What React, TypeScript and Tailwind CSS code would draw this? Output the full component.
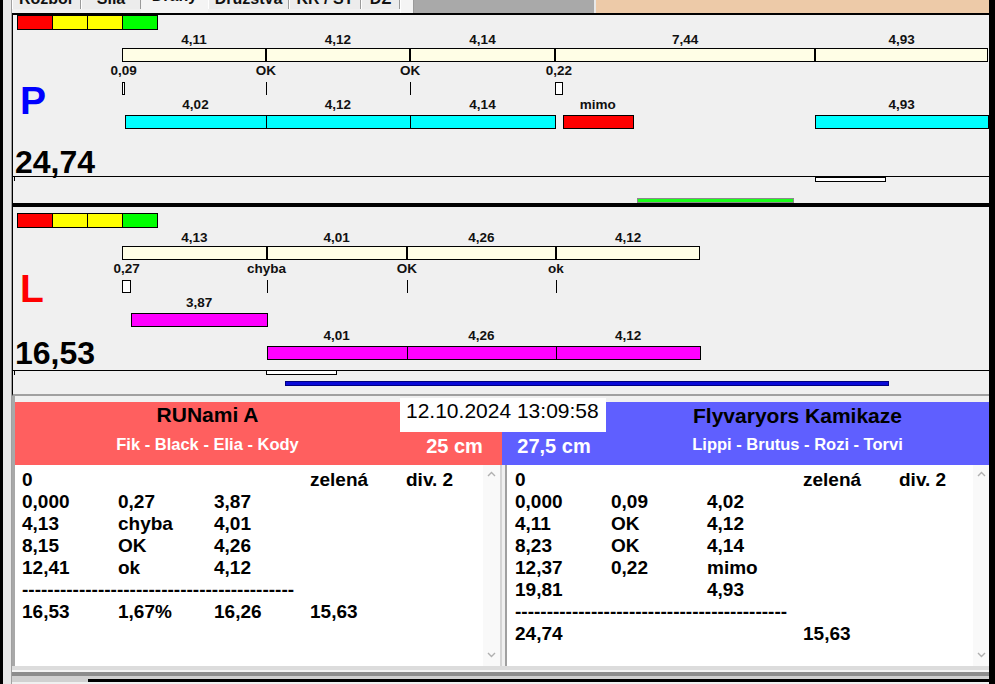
import React from 'react';

// pixelů na metr dráhy
const PX = 35;

type Mark = { label: string; at: number; box?: number };
type Bar = { label: string; from: number; to: number; color?: string };
type Row = { color: string; bars: Bar[] };

const fmt = (n: number) => n.toFixed(2).replace('.', ',');
const x = (m: number) => Math.round(m * PX);

const BLOCKS = ['bg-[#ff0000]', 'bg-[#ffff00]', 'bg-[#ffff00]', 'bg-[#00ff00]'];

const Label: React.FC<{ at: number; top: number; text: string }> = ({ at, top, text }) => (
  <div
    className="absolute -translate-x-1/2 whitespace-nowrap text-[13.5px] font-bold leading-[15px] text-[#111]"
    style={{ left: at * PX, top }}
  >
    {text}
  </div>
);

interface LaneProps {
  letter: string;
  letterColor: string;
  total: string;
  segments: number[];
  marks: Mark[];
  rows: Row[];
  frame: string;
  blocksPad: string;
  canvasH: string;
  letterMt: string;
  totalMt: string;
  stripH: string;
  children?: React.ReactNode;
}

/**
 * Jedna dráha: úseky, značky, běhy a souhrn
 */
const Lane: React.FC<LaneProps> = ({
  letter,
  letterColor,
  total,
  segments,
  marks,
  rows,
  frame,
  blocksPad,
  canvasH,
  letterMt,
  totalMt,
  stripH,
  children
}) => {
  const cum = segments.reduce<number[]>((acc, s) => [...acc, +(acc[acc.length - 1] + s).toFixed(2)], [0]);

  return (
    <div className={`border-l border-l-black bg-[#f0f0f0] ${frame}`}>
      <div className={`flex pl-[4px] ${blocksPad}`}>
        {BLOCKS.map((c, i) => (
          <div key={i} className={`h-[15px] w-[36px] border border-black ${c} ${i > 0 ? '-ml-px' : ''}`} />
        ))}
      </div>

      <div className={`flex ${canvasH}`}>
        <div className="flex w-[109px] shrink-0 flex-col">
          <div className={`ml-[7px] text-[39px] font-bold leading-none ${letterColor} ${letterMt}`}>{letter}</div>
          <div className={`ml-[2px] text-[32px] font-bold leading-none text-black ${totalMt}`}>{total}</div>
        </div>

        <div className="relative flex-1">
          {segments.map((s, i) => (
            <React.Fragment key={i}>
              <Label at={(cum[i] + cum[i + 1]) / 2} top={2} text={fmt(s)} />
              <div
                className="absolute top-[18px] h-[14px] border border-black bg-[#fffee6]"
                style={{ left: x(cum[i]), width: x(cum[i + 1]) - x(cum[i]) }}
              />
            </React.Fragment>
          ))}

          {marks.map((m, i) => (
            <React.Fragment key={i}>
              <Label at={m.box ? m.at + m.box / 2 : m.at} top={33} text={m.label} />
              {m.box ? (
                <div
                  className="absolute top-[52px] h-[13px] border border-black bg-white"
                  style={{ left: x(m.at), width: Math.max(3, x(m.box)) }}
                />
              ) : (
                <div className="absolute top-[52px] h-[13px] w-px bg-black" style={{ left: x(m.at) }} />
              )}
            </React.Fragment>
          ))}

          {rows.map((r, k) =>
            r.bars.map((b, j) => (
              <React.Fragment key={`${k}-${j}`}>
                <Label at={(b.from + b.to) / 2} top={67 + 33 * k} text={b.label} />
                <div
                  className={`absolute h-[14px] border border-black ${b.color ?? r.color}`}
                  style={{ left: x(b.from), width: x(b.to) - x(b.from) + 1, top: 85 + 33 * k }}
                />
              </React.Fragment>
            ))
          )}
        </div>
      </div>

      <div className={`relative border-t border-t-black ${stripH}`}>
        <div className="absolute left-[1px] top-0 h-[4px] w-px bg-black" />
        {children}
      </div>
    </div>
  );
};

const Chevron: React.FC<{ down?: boolean }> = ({ down }) => (
  <svg width="9" height="6" viewBox="0 0 9 6" className="shrink-0">
    <polyline
      points={down ? '1,1 4.5,4.5 8,1' : '1,5 4.5,1.5 8,5'}
      fill="none"
      stroke="#b0b0b0"
      strokeWidth="1.4"
    />
  </svg>
);

const DASH = '-'.repeat(43);

/**
 * Textový výpis s posuvníkem
 */
const TextPanel: React.FC<{ rows: string[][]; className: string; pad: string; bar: string }> = ({
  rows,
  className,
  pad,
  bar
}) => (
  <div className={`flex bg-white ${className}`}>
    <div className={`min-w-0 flex-1 overflow-hidden pt-[4px] text-[19px] font-bold leading-[22px] text-black ${pad}`}>
      {rows.map((r, i) => (
        <div key={i} className="flex h-[22px]">
          {r.map((c, j) => (
            <span key={j} className="w-[96px] shrink-0 whitespace-nowrap">
              {c}
            </span>
          ))}
        </div>
      ))}
    </div>
    <div className={`flex shrink-0 flex-col items-center justify-between bg-[#f9f9f9] pb-[8px] pt-[6px] ${bar}`}>
      <Chevron />
      <Chevron down />
    </div>
  </div>
);

const LEFT_ROWS = [
  ['0', '', '', 'zelená', 'div. 2'],
  ['0,000', '0,27', '3,87'],
  ['4,13', 'chyba', '4,01'],
  ['8,15', 'OK', '4,26'],
  ['12,41', 'ok', '4,12'],
  [DASH],
  ['16,53', '1,67%', '16,26', '15,63']
];

const RIGHT_ROWS = [
  ['0', '', '', 'zelená', 'div. 2'],
  ['0,000', '0,09', '4,02'],
  ['4,11', 'OK', '4,12'],
  ['8,23', 'OK', '4,14'],
  ['12,37', '0,22', 'mimo'],
  ['19,81', '', '4,93'],
  [DASH],
  ['24,74', '', '', '15,63']
];

const TABS = [
  { label: 'Rozbor', w: 'w-[69px]' },
  { label: 'Síla', w: 'w-[60px]' },
  { label: 'Dráhy', w: 'w-[67px]', active: true },
  { label: 'Družstva', w: 'w-[81px]' },
  { label: 'KR / ST', w: 'w-[72px]' },
  { label: 'DZ', w: 'w-[39px]' }
];

export default function App() {
  return (
    <div className="flex h-[684px] w-[995px] overflow-hidden bg-[#f0f0f0] font-['Liberation_Sans',Arial,sans-serif]">
      <div className="w-[3px] shrink-0 bg-black" />
      <div className="w-[9px] shrink-0 border-r border-[#a0a0a0] bg-[#e8e8e8]" />

      <div className="flex w-[977px] shrink-0 flex-col">
        {/* záložky */}
        <div className="flex h-[13px] overflow-hidden">
          {TABS.map((t) => (
            <div
              key={t.label}
              className={`${t.w} shrink-0 text-center text-[16px] font-bold leading-none text-[#111] ${
                t.active ? '-mt-[12px] bg-[#f4f4f4]' : '-mt-[9px] h-[18px] border-x border-l-white border-r-[#9a9a9a] bg-[#ececec]'
              }`}
            >
              {t.label}
            </div>
          ))}
          <div className="w-[14px] shrink-0 border-x border-l-white border-r-[#9a9a9a] bg-[#f4f4f4]" />
          <div className="w-[180px] shrink-0 bg-[#a9a9a9]" />
          <div className="w-[2px] shrink-0 bg-[#e8e8e8]" />
          <div className="flex-1 bg-[#edcaa8]" />
        </div>

        <Lane
          letter="P"
          letterColor="text-[#0000ff]"
          total="24,74"
          segments={[4.11, 4.12, 4.14, 7.44, 4.93]}
          marks={[
            { label: '0,09', at: 0, box: 0.09 },
            { label: 'OK', at: 4.11 },
            { label: 'OK', at: 8.23 },
            { label: '0,22', at: 12.37, box: 0.22 }
          ]}
          rows={[
            {
              color: 'bg-[#00ffff]',
              bars: [
                { label: '4,02', from: 0.09, to: 4.11 },
                { label: '4,12', from: 4.11, to: 8.23 },
                { label: '4,14', from: 8.23, to: 12.37 },
                { label: 'mimo', from: 12.59, to: 14.6, color: 'bg-[#ff0000]' },
                { label: '4,93', from: 19.81, to: 24.74 }
              ]
            }
          ]}
          frame="border-t-2 border-t-black"
          blocksPad="pt-0"
          canvasH="h-[146px]"
          letterMt="mt-[51px]"
          totalMt="mt-[26px]"
          stripH="h-[27px]"
        >
          <div className="absolute left-[802px] top-0 h-[5px] w-[71px] border border-black bg-white" />
          <div className="absolute left-[624px] top-[21px] h-[5px] w-[157px] border border-[#8a8a8a] bg-[#1aff1a]" />
        </Lane>

        <Lane
          letter="L"
          letterColor="text-[#ff0000]"
          total="16,53"
          segments={[4.13, 4.01, 4.26, 4.12]}
          marks={[
            { label: '0,27', at: 0, box: 0.27 },
            { label: 'chyba', at: 4.13 },
            { label: 'OK', at: 8.14 },
            { label: 'ok', at: 12.4 }
          ]}
          rows={[
            { color: 'bg-[#ff00ff]', bars: [{ label: '3,87', from: 0.27, to: 4.14 }] },
            {
              color: 'bg-[#ff00ff]',
              bars: [
                { label: '4,01', from: 4.13, to: 8.14 },
                { label: '4,26', from: 8.14, to: 12.4 },
                { label: '4,12', from: 12.4, to: 16.52 }
              ]
            }
          ]}
          frame="border-t-4 border-t-black border-b-2 border-b-[#a0a0a0]"
          blocksPad="pt-[6px]"
          canvasH="h-[142px]"
          letterMt="mt-[41px]"
          totalMt="mt-[29px]"
          stripH="h-[24px]"
        >
          <div className="absolute -top-px left-[253px] h-[5px] w-[71px] border border-black bg-white" />
          <div className="absolute left-[272px] top-[10px] h-[5px] w-[604px] border border-[#000080] bg-[#0a0ad8]" />
        </Lane>

        {/* družstva */}
        <div className="flex flex-col border-l-[3px] border-[#a8a8a8]">
          <div className="flex h-[69px]">
            <div className="mt-[6px] flex w-[385px] shrink-0 flex-col items-center bg-[#ff5f5f] pt-[2px]">
              <div className="text-[21px] font-bold leading-none text-black">RUNami A</div>
              <div className="mt-[11px] text-[16.5px] font-bold leading-none text-white">Fik - Black - Elia - Kody</div>
            </div>
            <div className="mt-[2px] flex w-[206px] shrink-0 flex-col">
              <div className="h-[34px] bg-white pl-[6px] pt-[2px] text-[21px] leading-none text-black">12.10.2024 13:09:58</div>
              <div className="flex flex-1">
                <div className="w-[102px] bg-[#ff5f5f] pl-[7px] pt-[4px] text-center text-[20px] font-bold leading-none text-white">25 cm</div>
                <div className="flex-1 bg-[#5f5fff] pt-[4px] text-center text-[20px] font-bold leading-none text-white">27,5 cm</div>
              </div>
            </div>
            <div className="mt-[6px] flex flex-1 flex-col items-center bg-[#5f5fff] pt-[3px]">
              <div className="text-[21px] font-bold leading-none text-black">Flyvaryors Kamikaze</div>
              <div className="mt-[10px] text-[16.5px] font-bold leading-none text-white">Lippi - Brutus - Rozi - Torvi</div>
            </div>
          </div>

          <div className="flex h-[201px]">
            <TextPanel rows={LEFT_ROWS} className="w-[485px] shrink-0" pad="pl-[7px]" bar="w-[17px]" />
            <div className="w-[7px] shrink-0 border-l-2 border-r-2 border-l-[#d4d4d4] border-r-[#a0a0a0] bg-[#f0f0f0]" />
            <TextPanel rows={RIGHT_ROWS} className="min-w-0 flex-1" pad="pl-[8px]" bar="w-[16px]" />
          </div>
        </div>

        <div className="flex h-[16px] flex-col">
          <div className="h-[4px] bg-[#dcdcdc]" />
          <div className="h-[2px] bg-[#f4f4f4]" />
          <div className="h-[4px] bg-[#8c8c8c]" />
          <div className="h-[3px] bg-[#d0d0d0]" />
          <div className="flex flex-1">
            <div className="w-[76px] bg-[#d0d0d0]" />
            <div className="flex-1 bg-black" />
          </div>
        </div>
      </div>

      <div className="w-[6px] shrink-0 bg-black" />
    </div>
  );
}
